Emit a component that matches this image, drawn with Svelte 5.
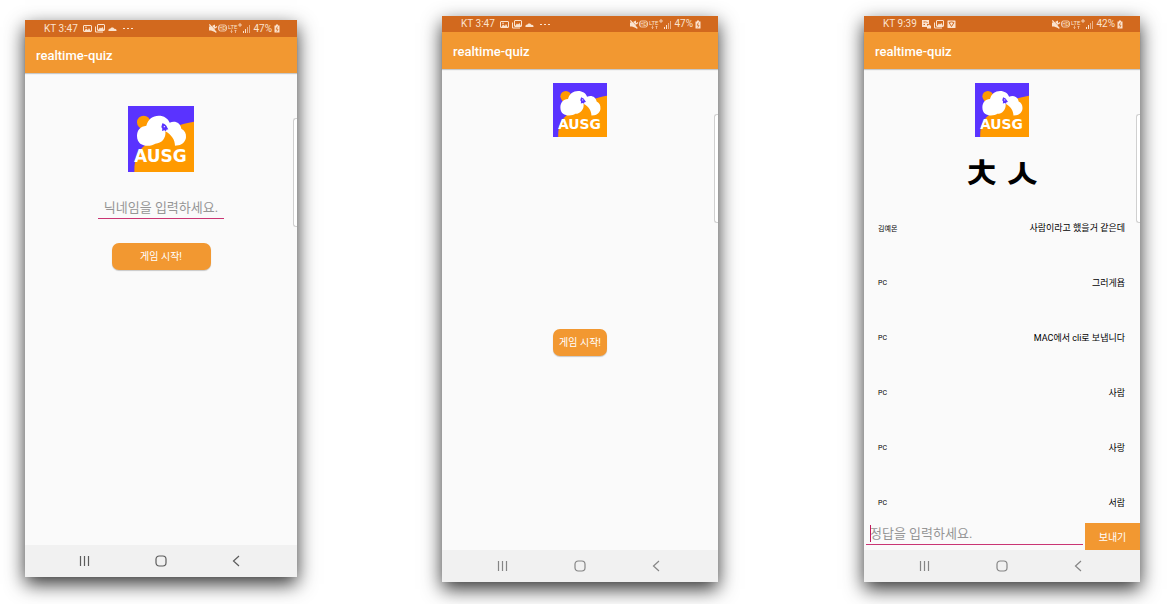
<script>
  const messages = [
    { from: '김예몬', text: '사람이라고 했을거 같은데' },
    { from: 'PC', text: '그러게욥' },
    { from: 'PC', text: 'MAC에서 cli로 보냅니다' },
    { from: 'PC', text: '사람' },
    { from: 'PC', text: '사랑' },
    { from: 'PC', text: '서람' }
  ];
  let nickname = $state('');
  let answer = $state('');
</script>

{#snippet logo()}
  <svg class="logo" viewBox="0 0 198 198" role="img" aria-label="AUSG">
    <rect width="198" height="198" fill="#5a33ff" />
    <path d="M19 198C18 150 36 126 60 112C92 92 112 62 198 47V198Z" fill="#ff9a00" />
    <circle cx="47" cy="49" r="20" fill="#ff9a00" />
    <path
      d="M27 90C27 72 37 61 55 59C60 39 74 29 92 29C108 29 120 37 125 50C142 43 157 51 160 68C170 73 175 82 174 94C173 106 164 116 151 118L141 119C141 101 130 86 112 76C115 96 101 113 82 113C68 123 27 125 27 90Z"
      fill="#fff"
    />
    <path d="M103 52Q114 54 118 65L121 70L115 71L114 76L109 73L102 75L103 68L100 63Z" fill="#5a33ff" />
    <circle cx="109" cy="62" r="2" fill="#fff" />
    <text x="18" y="169" class="logo-text">AUSG</text>
  </svg>
{/snippet}

{#snippet status(time, battery, evening)}
  <div class="status">
    <span>KT {time}</span>
    <span class="notices">
      {#if evening}
        <svg width="9" height="9" viewBox="0 0 9 9">
          <path d="M0 0H7V4H5V7H0Z" fill="currentColor" />
          <path d="M1.5 2H3.5M1.5 4.5H3M4 1.5L5.5 3" stroke="#d2691e" />
          <path d="M5 8.5V6L7 4.5L9 6V8.5Z" fill="currentColor" />
        </svg>
      {:else}
        <svg width="9" height="9" viewBox="0 0 9 9">
          <rect x="0.5" y="1.5" width="8" height="6" rx="0.5" fill="none" stroke="currentColor" />
          <path d="M1 7.5L3 4.5L5 6L6 4L8 7.5Z" fill="currentColor" />
          <circle cx="3" cy="3.2" r="0.8" fill="currentColor" />
        </svg>
      {/if}
      <svg width="10" height="9" viewBox="0 0 10 9">
        <path d="M0.5 2.5V8H8" fill="none" stroke="currentColor" />
        <rect x="2.5" y="0.5" width="7" height="6" rx="0.5" fill="none" stroke="currentColor" />
        <path d="M3 6L5 3.5L6 4.5L7.5 3L9 6Z" fill="currentColor" />
      </svg>
      {#if evening}
        <svg width="9" height="9" viewBox="0 0 9 9">
          <rect x="0.5" y="0.5" width="8" height="7.5" rx="0.5" fill="currentColor" />
          <path d="M2 2.5Q4.5 1.3 7 2.5L4.5 6.5Z" fill="none" stroke="#d2691e" />
        </svg>
      {:else}
        <svg width="9" height="9" viewBox="0 0 9 9">
          <path d="M0.5 7C0 5 1.5 4.6 2.2 4.8C3 3 5.6 3 6.2 4.8C8 4.5 9 5.8 8.4 7Z" fill="currentColor" />
        </svg>
        <svg class="more" width="10" height="9" viewBox="0 0 10 9" fill="currentColor">
          <rect x="0" y="4" width="2" height="1" />
          <rect x="4" y="4" width="2" height="1" />
          <rect x="8" y="4" width="2" height="1" />
        </svg>
      {/if}
    </span>
    <span class="signals">
      <svg width="42" height="11" viewBox="0 0 42 11">
        <path d="M0 3.5H2L6 1.5V9L2 7.5H0Z" fill="currentColor" />
        <path d="M1 1L8 9" stroke="#d2691e" stroke-width="0.8" fill="none" />
        <path d="M0.3 1.5L7.3 9.5M6 5L8 3.5" stroke="currentColor" stroke-width="1.2" fill="none" />
        <rect x="9.5" y="2" width="8" height="6" rx="2" fill="none" stroke="currentColor" stroke-width="0.8" />
        <text x="10.2" y="7" font-size="5">HD</text>
        <text x="19" y="5.6" font-size="6">LTE</text>
        <path d="M31 0V4M29 2H33" stroke="currentColor" stroke-width="0.8" />
        <path d="M22.5 6.5V9.5M21.5 8.5L22.5 9.5L23.5 8.5M26.5 10V7M25.5 8L26.5 7L27.5 8" stroke="currentColor" stroke-width="0.6" fill="none" />
        <g fill="currentColor">
          <rect x="34" y="8" width="1" height="2" />
          <rect x="36" y="6" width="1" height="4" />
          <rect x="38" y="4" width="1" height="6" opacity="0.6" />
          <rect x="40" y="2" width="1" height="8" opacity="0.6" />
        </g>
      </svg>
      <span>{battery}%</span>
      <svg width="6" height="9" viewBox="0 0 6 9">
        <path d="M2 0.5H4V1.5H5.5V8.5H0.5V1.5H2Z" fill="currentColor" />
        <path d="M3.5 2.5L2 5.2H4L2.8 7.5" stroke="#d2691e" stroke-width="0.8" fill="none" />
      </svg>
    </span>
  </div>
{/snippet}

{#snippet navigation()}
  <nav>
    <button type="button" aria-label="Recent apps">
      <svg width="12" height="12" viewBox="0 0 12 12"><path d="M1.5 1V11M5.5 1V11M9.5 1V11" /></svg>
    </button>
    <button type="button" aria-label="Home">
      <svg width="12" height="12" viewBox="0 0 12 12"><rect x="1" y="1" width="10" height="10" rx="3.2" /></svg>
    </button>
    <button type="button" aria-label="Back">
      <svg width="12" height="12" viewBox="0 0 12 12"><path d="M8 1L2.5 6L8 11" /></svg>
    </button>
  </nav>
{/snippet}

<main>
  <section class="phone nickname">
    {@render status('3:47', 47, false)}
    <header><h1>realtime-quiz</h1></header>
    <form class="body" onsubmit={(e) => e.preventDefault()}>
      {@render logo()}
      <input class="field" aria-label="닉네임" placeholder="닉네임을 입력하세요." bind:value={nickname} />
      <button class="start">게임 시작!</button>
    </form>
    {@render navigation()}
    <i class="edge"></i>
  </section>

  <section class="phone lobby">
    {@render status('3:47', 47, false)}
    <header><h1>realtime-quiz</h1></header>
    <div class="body">
      {@render logo()}
      <div class="center"><button class="start" type="button">게임 시작!</button></div>
    </div>
    {@render navigation()}
    <i class="edge"></i>
  </section>

  <section class="phone game">
    {@render status('9:39', 42, true)}
    <header><h1>realtime-quiz</h1></header>
    <div class="body">
      {@render logo()}
      <h2><span>ㅊ</span> <span>ㅅ</span></h2>
      <ul>
        {#each messages as message}
          <li><span class="from">{message.from}</span><span>{message.text}</span></li>
        {/each}
      </ul>
      <form class="answer" onsubmit={(e) => e.preventDefault()}>
        <div class="entry">
          <input class="field" aria-label="정답" placeholder="정답을 입력하세요." bind:value={answer} />
          <i class="caret"></i>
        </div>
        <button class="send">보내기</button>
      </form>
    </div>
    {@render navigation()}
    <i class="edge"></i>
  </section>
</main>

<style>
  :global(body) {
    margin: 0;
    background: #fff;
  }
  main {
    display: grid;
    grid-template-columns: 25fr 272fr 145fr 276fr 146fr 276fr 30fr;
    align-items: start;
    padding: 16px 0 22px;
    font-family: Roboto, 'Noto Sans CJK KR', sans-serif;
    color: #000;
  }
  .phone {
    position: relative;
    display: flex;
    flex-direction: column;
    aspect-ratio: 276 / 566;
    min-width: 0;
    background: #fafafa;
    box-shadow: 0 7px 18px rgba(0, 0, 0, 0.8);
  }
  .nickname {
    grid-column: 2;
    margin-top: 4px;
    aspect-ratio: 272 / 557;
  }
  .lobby {
    grid-column: 4;
  }
  .game {
    grid-column: 6;
  }
  .status {
    display: flex;
    align-items: center;
    height: 16px;
    padding: 0 17px 0 19px;
    background: #d2691e;
    color: #fbe3cf;
    font-size: 10px;
    line-height: 16px;
    white-space: nowrap;
  }
  .nickname .status {
    height: 17px;
  }
  .status svg {
    display: block;
  }
  .status text {
    fill: currentColor;
  }
  .notices {
    display: flex;
    gap: 3px;
    margin-left: 5px;
  }
  .more {
    margin-left: 3px;
  }
  .signals {
    display: flex;
    align-items: center;
    gap: 2px;
    margin-left: auto;
  }
  header {
    position: relative;
    display: flex;
    align-items: center;
    box-sizing: border-box;
    height: 37px;
    padding: 2px 11px 0;
    background: #f29831;
    box-shadow: 0 1px 1px rgba(0, 0, 0, 0.2);
  }
  .nickname header {
    height: 36px;
  }
  h1 {
    margin: 0;
    color: #fff;
    font-size: 13px;
    font-weight: 500;
    line-height: 16px;
  }
  .body {
    display: flex;
    flex: 1;
    flex-direction: column;
    align-items: center;
    min-height: 0;
    padding-top: 14px;
  }
  .nickname .body {
    padding-top: 33px;
  }
  .logo {
    display: block;
    flex: none;
    width: 54px;
    height: 54px;
  }
  .nickname .logo {
    width: 66px;
    height: 66px;
  }
  .logo-text {
    fill: #fff;
    font: bold 51px 'DejaVu Sans', sans-serif;
  }
  button {
    padding: 0;
    border: 0;
    font: inherit;
  }
  .field {
    box-sizing: border-box;
    width: 100%;
    height: 24px;
    padding: 2px 4px 0;
    border: 0;
    border-bottom: 1px solid #c93573;
    outline: 0;
    background: none;
    font: inherit;
    font-size: 13px;
  }
  .field::placeholder {
    color: #959595;
    opacity: 1;
  }
  .nickname .field {
    width: 126px;
    margin-top: 23px;
    text-align: center;
  }
  .start {
    width: 54px;
    height: 27px;
    border-radius: 7px;
    background: #f29831;
    box-shadow: 0 1px 1px rgba(0, 0, 0, 0.2);
    color: #fff;
    font-size: 10px;
    line-height: 28px;
    white-space: nowrap;
  }
  .nickname .start {
    width: 99px;
    margin-top: 24px;
  }
  .center {
    display: flex;
    flex: 1;
    align-items: center;
    padding-bottom: 3px;
  }
  h2 {
    display: flex;
    margin: 14px 0 0;
    font-size: 44px;
    font-weight: 500;
    line-height: 49px;
  }
  ul {
    flex: 1;
    align-self: stretch;
    min-height: 0;
    margin: 0;
    padding: 0 15px 0 14px;
    overflow: hidden;
    list-style: none;
  }
  li {
    display: flex;
    align-items: center;
    justify-content: space-between;
    height: 55px;
    font-size: 9px;
  }
  .from {
    font-size: 7px;
  }
  .answer {
    display: flex;
    align-self: stretch;
    height: 27px;
  }
  .entry {
    position: relative;
    flex: 1;
    padding: 0 2px;
  }
  .entry .field {
    height: 22px;
    padding-top: 0;
  }
  .caret {
    position: absolute;
    top: 2px;
    left: 6px;
    width: 1px;
    height: 17px;
    background: #c2185b;
  }
  .send {
    width: 55px;
    background: #f29831;
    color: #fff;
    font-size: 10px;
  }
  nav {
    display: grid;
    grid-template-columns: repeat(3, 1fr);
    height: 32px;
    padding: 0 22px;
    background: #f1f1f1;
  }
  nav button {
    display: flex;
    align-items: center;
    justify-content: center;
    background: none;
  }
  nav svg {
    fill: none;
    stroke: #858585;
    stroke-width: 1.2;
  }
  .nickname nav svg {
    stroke: #5c5c5c;
  }
  .edge {
    position: absolute;
    top: 98px;
    right: 0;
    width: 4px;
    height: 109px;
    box-sizing: border-box;
    border: 1px solid #d0d0d0;
    border-right: 0;
    border-radius: 3px 0 0 3px;
    background: #fff;
  }
</style>
